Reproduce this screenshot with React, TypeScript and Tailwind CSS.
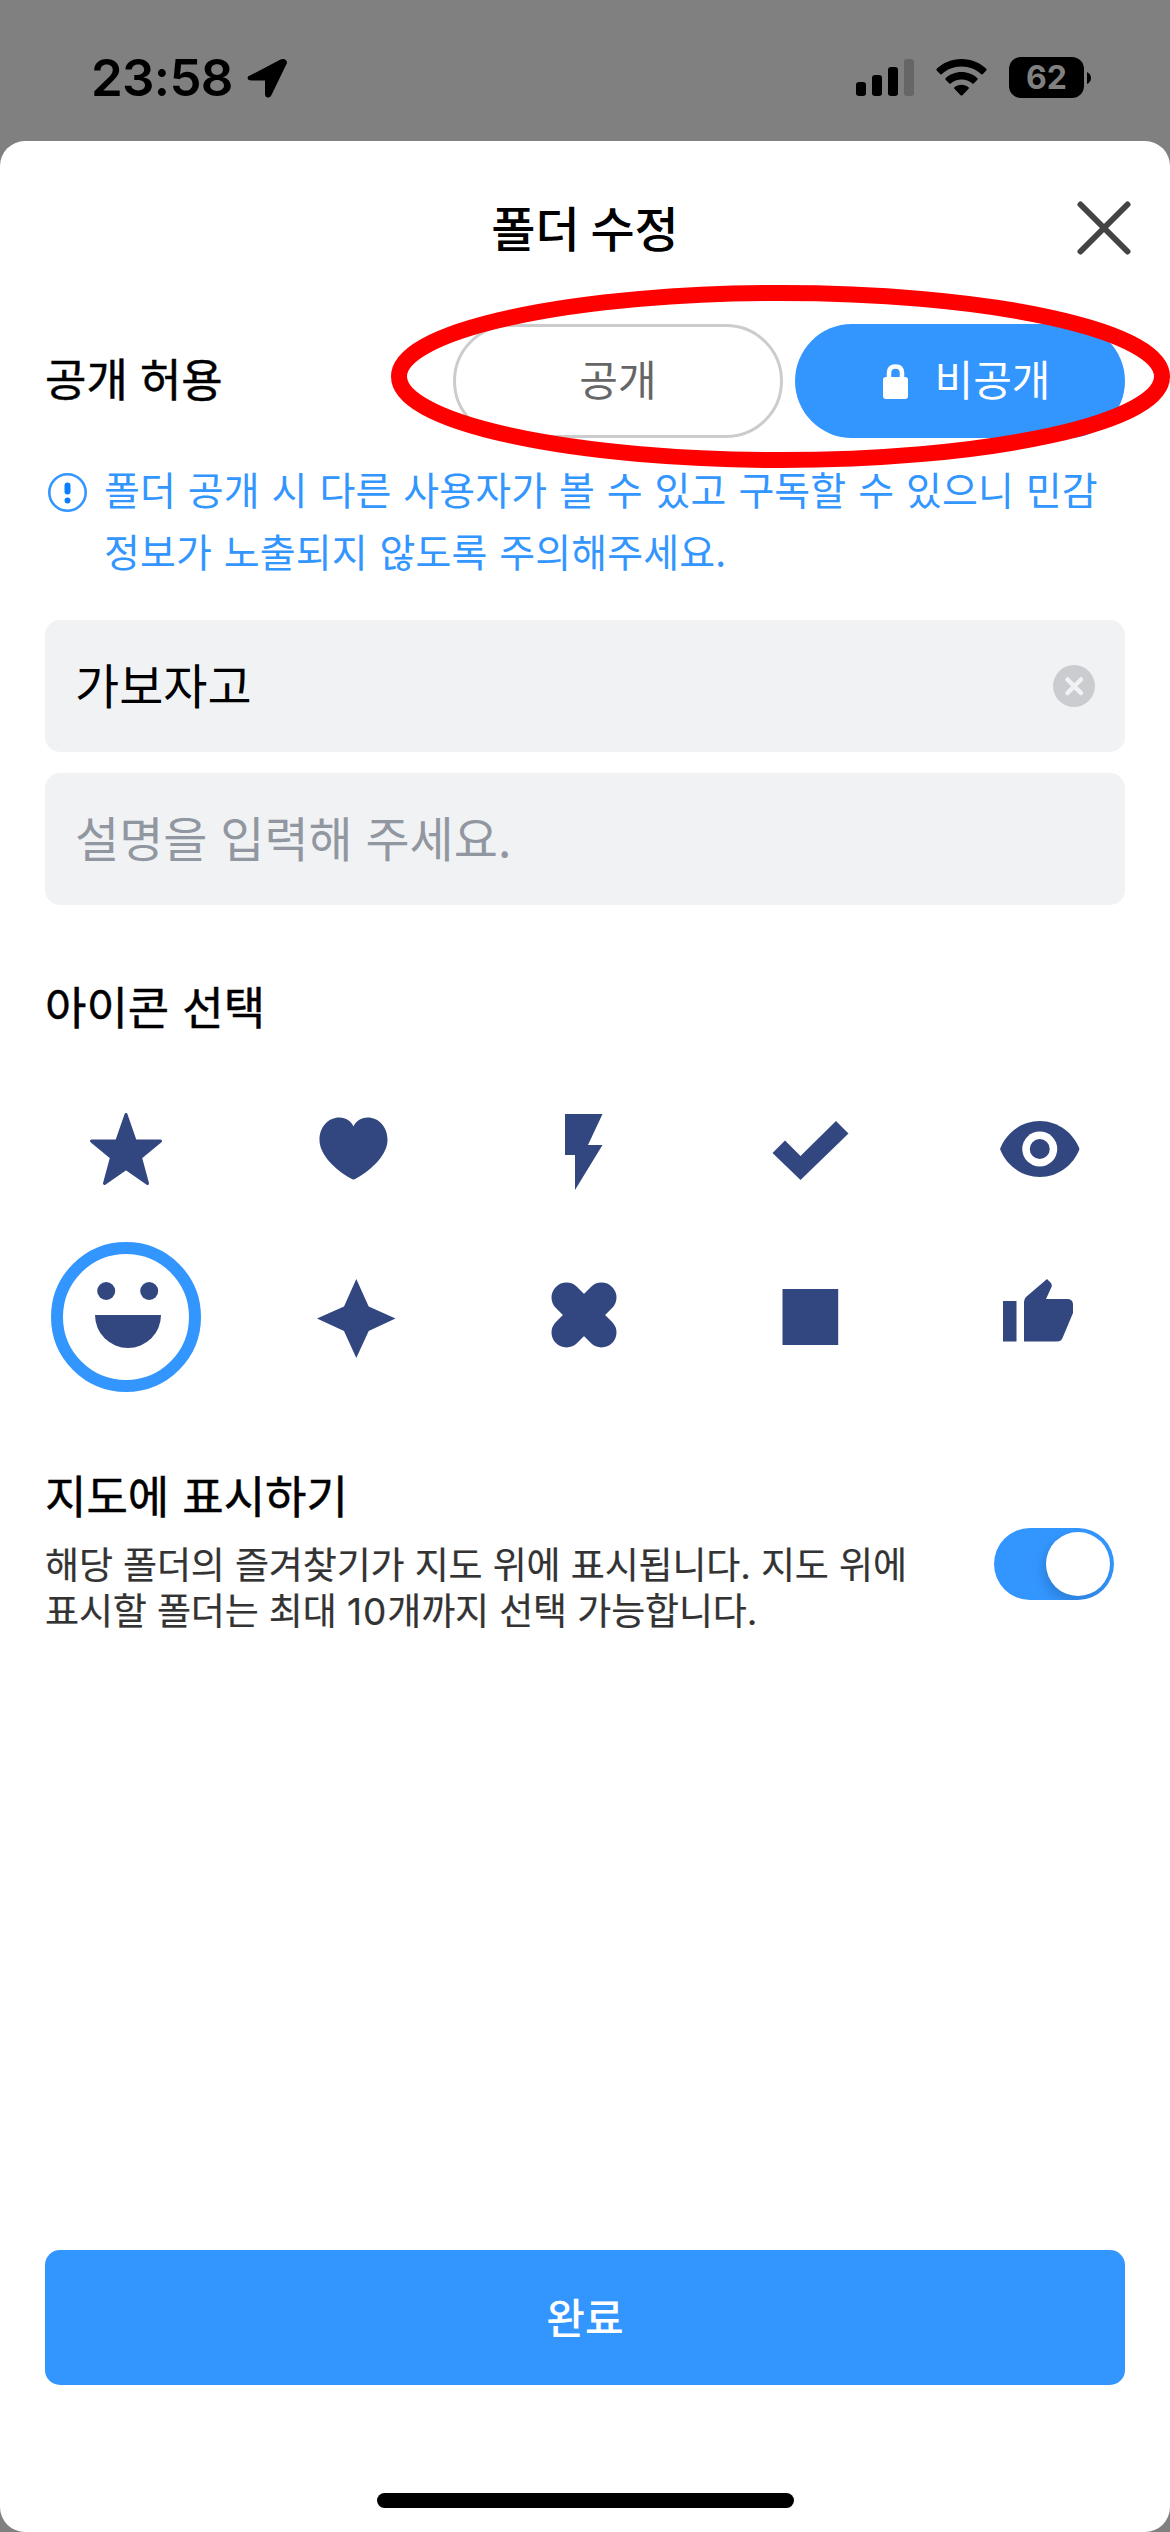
import { useState, type ReactNode } from "react";

const ICONS: { id: string; shape: ReactNode }[] = [
  {
    id: "star",
    shape: (
      <path
        d="M75 40.5 84.2 67H109.5L89.5 83.5 96.5 109.5 75 94.6 53.5 109.5 60.5 83.5 40.5 67H65.8Z"
        stroke="currentColor"
        strokeWidth="3"
        strokeLinejoin="round"
      />
    ),
  },
  {
    id: "heart",
    shape: (
      <path d="M73.5 52.5C76 47 81 43.5 87.5 43.5 99 43.5 107.5 53 107.5 66 107.5 80 93 95 76 104.6Q73.5 106.3 71 104.6C54 95 39.5 80 39.5 66 39.5 53 48 43.5 59.5 43.5 66 43.5 71 47 73.5 52.5Z" />
    ),
  },
  { id: "bolt", shape: <path d="M57 40H94.5L80 71H94.5L67 116V81H57Z" /> },
  { id: "check", shape: <path d="M35.5 79 48 66.5 63.5 82 99 47 111.5 59.5 63.5 106Z" /> },
  {
    id: "eye",
    shape: (
      <>
        <path d="M35 75C41 59 56.5 47 74.75 47S108.5 59 114.5 75C108.5 91 93 103 74.75 103S41 91 35 75Z" />
        <circle cx="74.75" cy="75" r="17.5" fill="#fff" />
        <circle cx="74.75" cy="75" r="10" />
      </>
    ),
  },
  {
    id: "smile",
    shape: (
      <>
        <circle cx="55.2" cy="49" r="9" />
        <circle cx="98.2" cy="49" r="9" />
        <path d="M44 73H110A33 33 0 0 1 44 73Z" />
      </>
    ),
  },
  {
    id: "sparkle",
    shape: <path d="M76.3 37 88.7 64.5 115.5 76.5 88.7 89 76.3 116 64 89 37 76.5 64 64.5Z" />,
  },
  {
    id: "clover",
    shape: (
      <path
        d="M58.5 55.5 93.5 90.5M93.5 55.5 58.5 90.5"
        stroke="currentColor"
        strokeWidth="30"
        strokeLinecap="round"
      />
    ),
  },
  { id: "square", shape: <path d="M45.5 47H101.2V103H45.5Z" /> },
  {
    id: "thumb",
    shape: (
      <path d="M38 59H51.5V99.5H38ZM59 99.5V60Q59 57 61 55L82 37 85.5 40.5Q87.5 42.5 86.5 45L81 57H102Q108 57 108 62.5V71L97.5 96Q96 99.5 92 99.5Z" />
    ),
  },
];

function StatusBar() {
  return (
    <div className="flex h-[141px] items-start justify-between pl-[91px] pr-[79px] pt-[57px] text-black">
      <div className="flex items-center gap-[14px] font-['Inter',sans-serif]">
        <span className="text-[51px] font-semibold leading-[42px] tracking-[-0.7px]">23:58</span>
        <svg width="40" height="40" viewBox="0 0 40 40" fill="currentColor">
          <path d="M3 17.5 33.5 1.6Q37 .2 39 2.2T39 7L24.5 37Q23 40 20.5 39.5T18 36V22.5H4.5Q1 22.5.6 20.3T3 17.5Z" />
        </svg>
      </div>
      <div className="flex items-center">
        <svg width="58" height="37" viewBox="0 0 58 37" fill="currentColor">
          <rect x="0" y="23" width="10" height="14" rx="3" />
          <rect x="16" y="16" width="10" height="21" rx="3" />
          <rect x="32" y="8" width="10" height="29" rx="3" />
          <rect x="48" y="0" width="10" height="37" rx="3" fill="#666" />
        </svg>
        <svg className="ml-[22px]" width="51" height="37" viewBox="0 0 51 37" fill="currentColor">
          <path d="M25.5 0C35.5 0 44 3.8 50.3 9.8Q51 10.6 50.3 11.4L46.6 15.2Q46 15.8 45.3 15.2C40 10.4 33.2 7.6 25.5 7.6S11 10.4 5.7 15.2Q5 15.8 4.4 15.2L.7 11.4Q0 10.6.7 9.8C7 3.8 15.5 0 25.5 0Z" />
          <path d="M25.5 13C31.7 13 37.2 15.3 41.4 19.2Q42.1 20 41.4 20.8L37.7 24.5Q37 25.1 36.3 24.5C33.4 22 29.6 20.5 25.5 20.5S17.6 22 14.7 24.5Q14 25.1 13.3 24.5L9.6 20.8Q8.9 20 9.6 19.2C13.8 15.3 19.3 13 25.5 13Z" />
          <path d="M25.5 25.7C28.2 25.7 30.7 26.7 32.6 28.3Q33.3 29.1 32.6 29.8L26.4 36.2Q25.5 37 24.6 36.2L18.4 29.8Q17.7 29.1 18.4 28.3C20.3 26.7 22.8 25.7 25.5 25.7Z" />
        </svg>
        <div className="ml-[22px] flex h-[41px] w-[75px] items-center justify-center rounded-[12px] bg-black font-['Inter',sans-serif] text-[32px] font-bold leading-none text-[#808080]">
          62
        </div>
        <svg className="ml-[3px]" width="4" height="12" viewBox="0 0 4 12" fill="currentColor">
          <path d="M0 0Q4 2 4 6T0 12Z" />
        </svg>
      </div>
    </div>
  );
}

function Toggle({ on, onChange }: { on: boolean; onChange: () => void }) {
  return (
    <button
      role="switch"
      aria-checked={on}
      onClick={onChange}
      className={`mt-[62px] flex h-[72px] w-[120px] items-center overflow-hidden rounded-full px-1 ${
        on ? "justify-end bg-[#3396ff]" : "justify-start bg-[#ccc]"
      }`}
    >
      <span className="h-[64px] w-[64px] rounded-full bg-white shadow-[-3px_6px_12px_rgba(0,0,0,0.15)]" />
    </button>
  );
}

export default function App() {
  const [isPublic, setIsPublic] = useState(false);
  const [name, setName] = useState("가보자고");
  const [description, setDescription] = useState("");
  const [icon, setIcon] = useState("smile");
  const [showOnMap, setShowOnMap] = useState(true);

  return (
    <div className="flex h-[2532px] w-[1170px] flex-col overflow-hidden bg-[#808080] font-['Noto_Sans_CJK_KR',sans-serif] text-black">
      <StatusBar />

      <div className="relative flex flex-1 flex-col rounded-[25px] bg-white px-[45px]">
        <header className="relative flex h-[175px] items-center justify-center pb-[6px]">
          <h1 className="text-[48px] font-medium leading-[60px]">폴더 수정</h1>
          <button aria-label="닫기" className="absolute -right-[6px] top-[60px]">
            <svg width="54" height="54" viewBox="0 0 54 54" stroke="#444" strokeWidth="6" strokeLinecap="round">
              <path d="M3.5 3.5 50.5 50.5M50.5 3.5 3.5 50.5" />
            </svg>
          </button>
        </header>

        <div className="mt-2 flex items-center justify-between">
          <span className="pb-[6px] text-[45px] leading-[60px] [-webkit-text-stroke:0.5px] [word-spacing:2px]">
            공개 허용
          </span>
          <div className="flex gap-3">
            <button
              onClick={() => setIsPublic(true)}
              className={`flex h-[114px] w-[330px] items-center justify-center rounded-full text-[42px] leading-none ${
                isPublic ? "bg-[#3396ff] text-white" : "border-3 border-[#ccc] text-[#666]"
              }`}
            >
              <span className="pb-[6px]">공개</span>
            </button>
            <button
              onClick={() => setIsPublic(false)}
              className={`flex h-[114px] w-[330px] items-center justify-center gap-[27px] rounded-full pl-[13px] text-[42px] leading-none ${
                isPublic ? "border-3 border-[#ccc] text-[#666]" : "bg-[#3396ff] text-white"
              }`}
            >
              <svg width="25" height="35" viewBox="0 0 25 35" className="fill-current stroke-current">
                <path d="M6 15V9Q6 2.5 12.5 2.5T19 9V15" fill="none" strokeWidth="4.5" />
                <rect y="13" width="25" height="22" rx="3" stroke="none" />
              </svg>
              <span className="pb-[6px]">비공개</span>
            </button>
          </div>
        </div>
        {/* red marker around the visibility buttons */}
        <svg
          className="pointer-events-none absolute left-[391px] top-[144px]"
          width="779"
          height="183"
          viewBox="0 0 779 183"
          fill="none"
        >
          <ellipse cx="389.5" cy="91.5" rx="381.5" ry="83.5" stroke="#f00" strokeWidth="16" />
        </svg>

        <div className="mt-[19px] flex gap-[17px] pl-[3px] text-[#3396ff]">
          <svg className="mt-[16px] shrink-0" width="39" height="39" viewBox="0 0 39 39" fill="none">
            <circle cx="19.5" cy="19.5" r="18.2" stroke="#3396ff" strokeWidth="2.6" />
            <path d="M19.5 12.5V18.5M19.5 27.5V27.6" stroke="#0a7fff" strokeWidth="6" strokeLinecap="round" />
          </svg>
          <p className="whitespace-nowrap text-[39px] leading-[62px] tracking-[0.1px] [word-spacing:3px]">
            폴더 공개 시 다른 사용자가 볼 수 있고 구독할 수 있으니 민감
            <br />
            정보가 노출되지 않도록 주의해주세요.
          </p>
        </div>

        <div className="mt-[39px] flex h-[132px] items-center rounded-[15px] bg-[#f1f2f4] px-[30px]">
          <input
            value={name}
            onChange={(e) => setName(e.target.value)}
            className="h-[80px] flex-1 pb-[7px] text-[48px] outline-none"
          />
          <button aria-label="지우기" onClick={() => setName("")}>
            <svg width="42" height="42" viewBox="0 0 42 42">
              <circle cx="21" cy="21" r="21" fill="#cbccd0" />
              <path d="M14.5 14.5 28 28M28 14.5 14.5 28" stroke="#f1f2f4" strokeWidth="4.5" strokeLinecap="round" />
            </svg>
          </button>
        </div>
        <div className="mt-[21px] flex h-[132px] items-center rounded-[15px] bg-[#f1f2f4] px-[30px]">
          <input
            value={description}
            onChange={(e) => setDescription(e.target.value)}
            placeholder="설명을 입력해 주세요."
            className="h-[80px] flex-1 pb-[7px] text-[48px] outline-none [word-spacing:2px] placeholder:text-[#9197a1]"
          />
        </div>

        <h2 className="mt-[71px] text-[45px] leading-[60px] [-webkit-text-stroke:0.5px] [word-spacing:3px]">
          아이콘 선택
        </h2>
        <div className="mt-[38px] grid grid-cols-[repeat(5,150px)] justify-between gap-y-[18px] pl-[6px] pr-[10px]">
          {ICONS.map(({ id, shape }) => (
            <button key={id} aria-label={id} onClick={() => setIcon(id)} className="text-[#324680]">
              <svg width="150" height="150" viewBox="0 0 150 150" fill="currentColor">
                {icon === id && (
                  <circle cx="75" cy="75" r="69" fill="none" stroke="#3396ff" strokeWidth="12" />
                )}
                {shape}
              </svg>
            </button>
          ))}
        </div>

        <div className="mt-[74px] flex items-start justify-between pr-[11px]">
          <div>
            <h2 className="-mt-[1px] text-[45px] leading-[60px] [-webkit-text-stroke:0.5px] [word-spacing:3px]">
              지도에 표시하기
            </h2>
            <p className="mt-[18px] whitespace-nowrap font-['Inter','Noto_Sans_CJK_KR',sans-serif] text-[37px] leading-[46px] tracking-[-0.15px] text-[#333] [-webkit-text-stroke:0.2px]">
              해당 폴더의 즐겨찾기가 지도 위에 표시됩니다. 지도 위에
              <br />
              표시할 폴더는 최대 <span className="tracking-[1px]">10</span>개까지 선택 가능합니다.
            </p>
          </div>
          <Toggle on={showOnMap} onChange={() => setShowOnMap(!showOnMap)} />
        </div>

        <button className="mt-auto h-[135px] rounded-[15px] bg-[#3396ff] pb-[4px] text-[42px] font-medium leading-none text-white">
          완료
        </button>
        <div className="mx-auto mb-[24px] mt-[108px] h-[15px] w-[417px] rounded-full bg-black" />
      </div>
    </div>
  );
}
